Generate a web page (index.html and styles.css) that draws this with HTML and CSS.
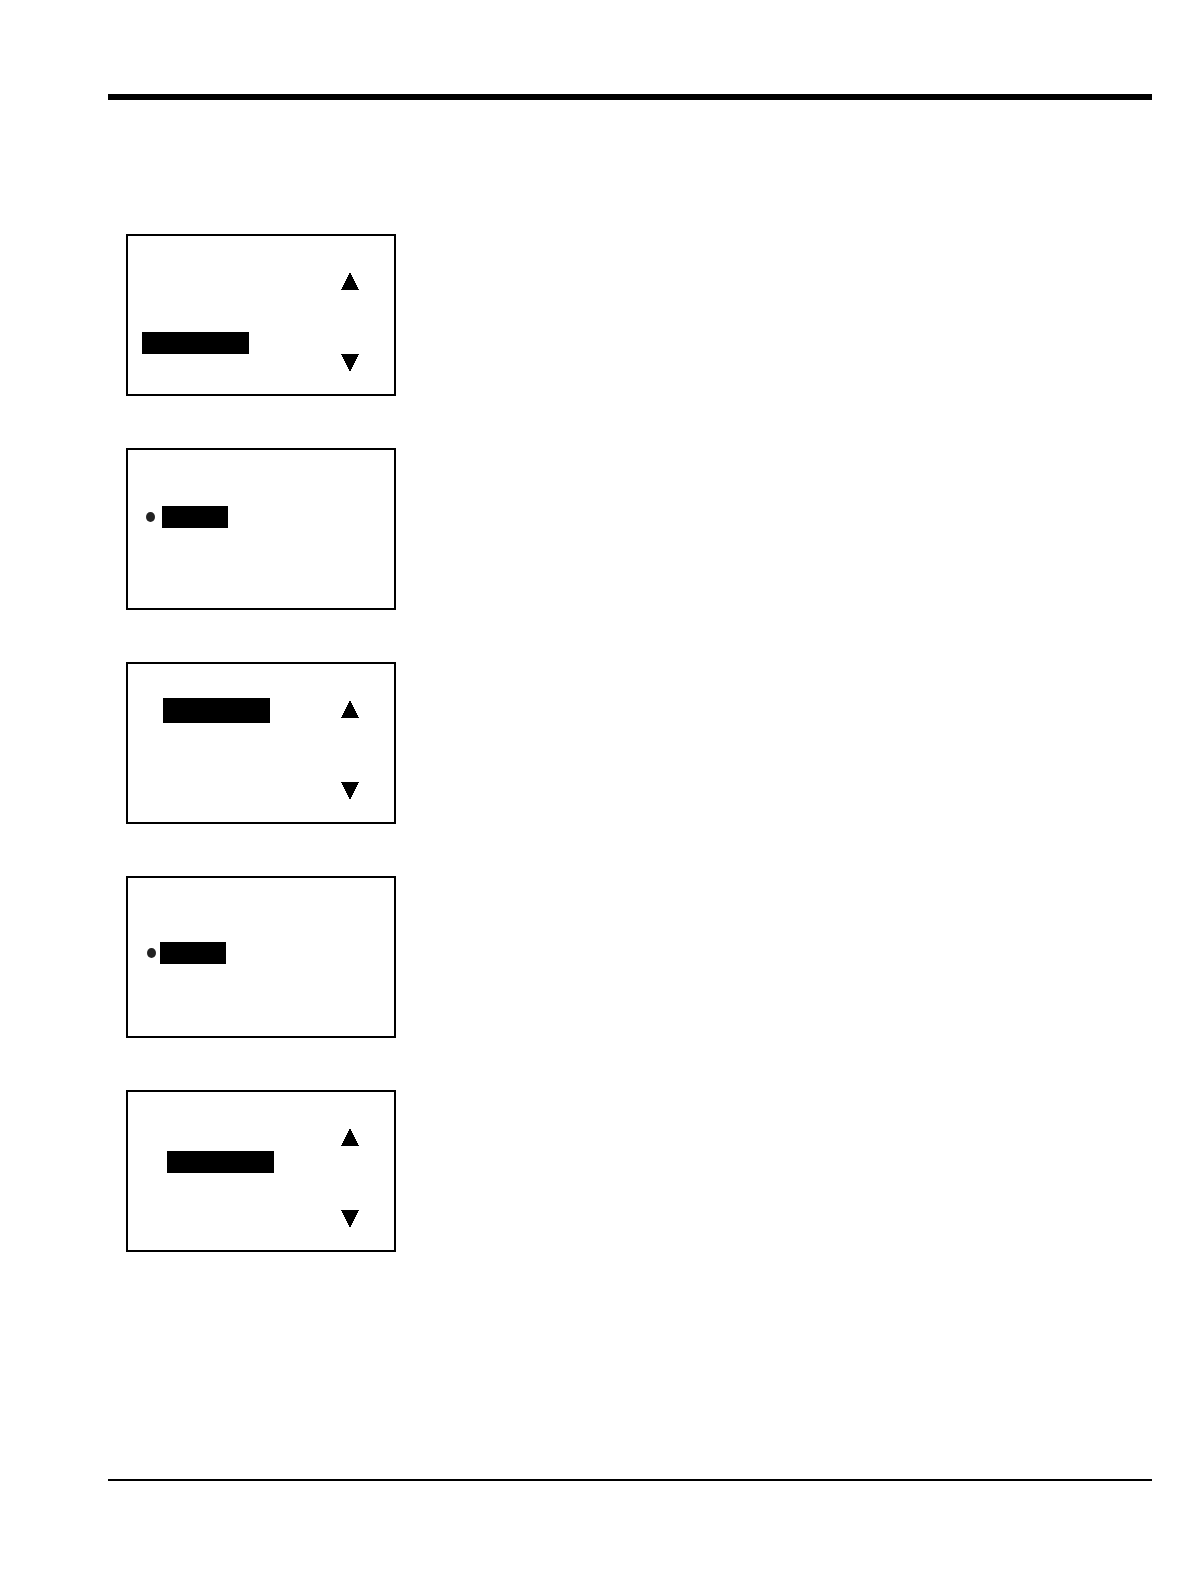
FILE: index.html
```html
<!DOCTYPE html>
<html lang="en">
<head>
<meta charset="utf-8">
<meta name="viewport" content="width=device-width, initial-scale=1">
<title>Display screens</title>
<link rel="stylesheet" href="styles.css">
</head>
<body>
<div class="page">
  <header class="page-header"></header>
  <main class="screens">
    <section class="screen screen-menu-low">
      <div class="entry"><span class="bar bar-wide"></span></div>
      <div class="arrows">
        <svg class="arrow" viewBox="0 0 18 18" aria-hidden="true"><path d="M9 0L18 18H0Z"/></svg>
        <svg class="arrow" viewBox="0 0 18 18" aria-hidden="true"><path d="M0 0H18L9 18Z"/></svg>
      </div>
    </section>
    <section class="screen screen-option">
      <div class="entry"><span class="dot"></span><span class="bar"></span></div>
    </section>
    <section class="screen screen-menu-top">
      <div class="entry"><span class="bar bar-wide bar-tall"></span></div>
      <div class="arrows">
        <svg class="arrow" viewBox="0 0 18 18" aria-hidden="true"><path d="M9 0L18 18H0Z"/></svg>
        <svg class="arrow" viewBox="0 0 18 18" aria-hidden="true"><path d="M0 0H18L9 18Z"/></svg>
      </div>
    </section>
    <section class="screen screen-option-low">
      <div class="entry"><span class="dot"></span><span class="bar"></span></div>
    </section>
    <section class="screen screen-menu-middle">
      <div class="entry"><span class="bar bar-wide"></span></div>
      <div class="arrows">
        <svg class="arrow" viewBox="0 0 18 18" aria-hidden="true"><path d="M9 0L18 18H0Z"/></svg>
        <svg class="arrow" viewBox="0 0 18 18" aria-hidden="true"><path d="M0 0H18L9 18Z"/></svg>
      </div>
    </section>
  </main>
  <footer class="page-footer"></footer>
</div>
</body>
</html>
```
FILE: styles.css
```css
* {
  box-sizing: border-box;
}

body {
  margin: 0;
  background: #fff;
  font-family: "Liberation Sans", sans-serif;
}

.page {
  display: flex;
  flex-direction: column;
  min-height: 100vh;
  padding: 94px 39px 103px 108px;
}

.page-header {
  border-top: 6px solid #000;
}

.screens {
  display: flex;
  flex-direction: column;
  gap: 52px;
  padding: 134px 18px 52px;
}

.page-footer {
  margin-top: auto;
  border-top: 2px solid #000;
}

/* One framed display screen */
.screen {
  display: flex;
  justify-content: space-between;
  width: 270px;
  max-width: 100%;
  min-height: 162px;
  border: 2px solid #000;
}

.entry {
  display: flex;
  align-items: center;
  align-self: flex-start;
}

.bar {
  width: 66px;
  height: 22px;
  background: #000;
}

.bar-wide {
  width: 107px;
}

.bar-tall {
  height: 25px;
}

.dot {
  width: 9px;
  height: 10px;
  border-radius: 50%;
  background: #222;
}

.arrows {
  display: flex;
  flex-direction: column;
  justify-content: space-between;
  padding: 36px 35px 22px 0;
}

.arrow {
  display: block;
  width: 18px;
  height: 18px;
  fill: #000;
  shape-rendering: crispEdges;
}

/* Where the highlighted entry sits on each screen */
.screen-menu-low .entry {
  padding: 96px 0 0 14px;
}

.screen-option .entry {
  gap: 7px;
  padding: 56px 0 0 18px;
}

.screen-menu-top .entry {
  padding: 34px 0 0 35px;
}

.screen-option-low .entry {
  gap: 4px;
  padding: 64px 0 0 19px;
}

.screen-menu-middle .entry {
  padding: 59px 0 0 39px;
}
```
